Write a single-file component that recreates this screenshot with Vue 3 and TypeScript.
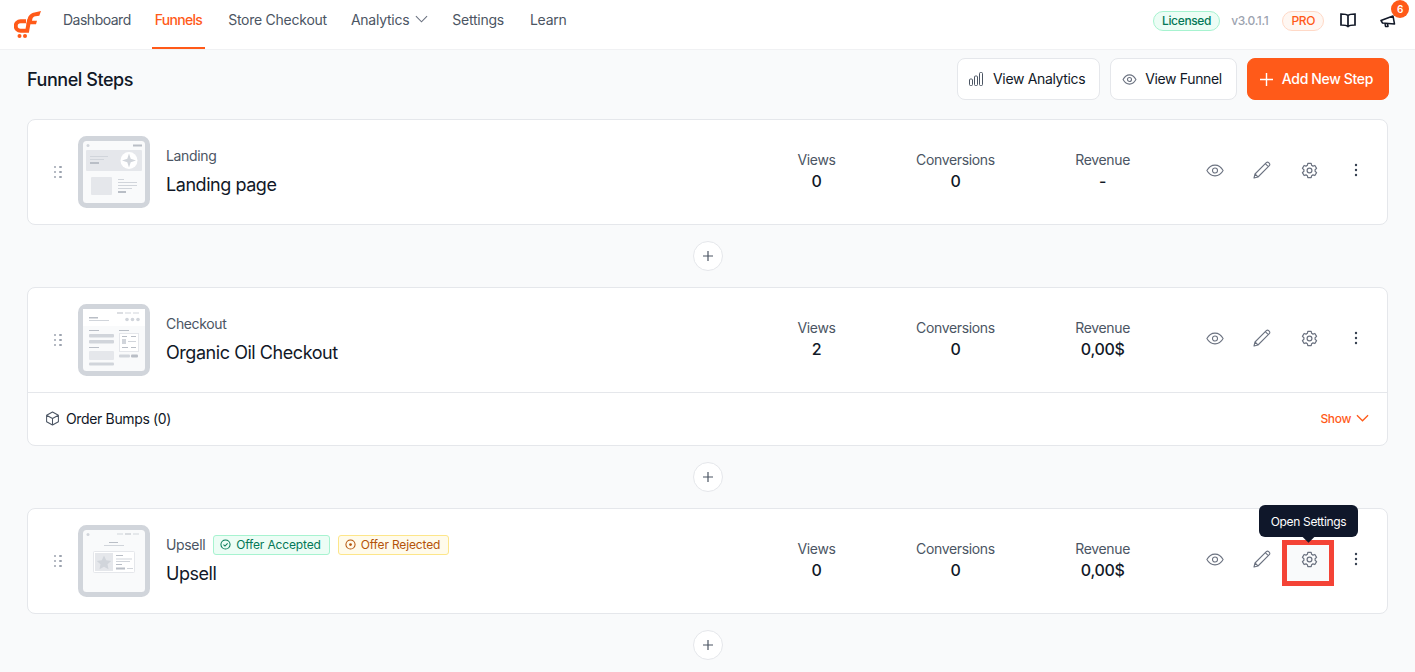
<template>
  <div class="app-shell">
    <!-- top nav -->
    <header class="top-nav">
      <svg class="logo" viewBox="13 6 28 29" width="28" height="29">
        <path d="M25 17.200h-5.500a4.800 4.800 0 0 0 0 9.600h6.700L28.200 15.500" fill="none" stroke="#ff5a19" stroke-width="4" />
        <path d="M26.500 15.800c.6-4.600 3.500-6.600 7-7.300l6.500-1.500-1.700 4.700-3.800.6c-1.700.3-2.900 1.200-3.200 2.900l-.3 1.500h5l-1 3.600h-9.600z" fill="#ff5a19" />
        <circle cx="18.500" cy="32" r="2" fill="#ff5a19" />
        <circle cx="24" cy="32" r="2" fill="#ff5a19" />
      </svg>
      <nav class="nav-links">
        <a v-for="item in navItems" :key="item" class="nav-link" :class="{ active: item === 'Funnels' }">
          {{ item }}
          <svg v-if="item === 'Analytics'" class="chevron" viewBox="0 0 14 8" width="13" height="8">
            <path d="M1 1l6 6 6-6" fill="none" stroke="#6b7280" stroke-width="1.200" />
          </svg>
        </a>
      </nav>
      <div class="nav-right">
        <span class="pill licensed">Licensed</span>
        <span class="version">v3.0.1.1</span>
        <span class="pill pro">PRO</span>
        <svg class="book" viewBox="0 0 16 15" width="16" height="15">
          <path d="M8 2.500C6.800 1.300 4 1 1 1v11c3 0 5.800.2 7 1.500 1.200-1.300 4-1.500 7-1.500V1c-3 0-5.800.3-7 1.500zm0 0v11" fill="none" stroke="#111827" stroke-width="1.700" />
        </svg>
        <span class="announce">
          <svg viewBox="0 0 16 14" width="16" height="14">
            <path d="M1 6.500l12-4.500 1.500 8-12-1zM5 9.500l.5 3h2.500l-.5-2.800" fill="none" stroke="#111827" stroke-width="1.500" stroke-linejoin="round" />
          </svg>
          <b class="count">6</b>
        </span>
      </div>
    </header>

    <main class="content">
      <div class="title-row">
        <h1>Funnel Steps</h1>
        <div class="title-actions">
          <button class="btn analytics">
            <svg viewBox="0 0 14 14" width="14" height="14" fill="none" stroke="#4b5563" stroke-width="1">
              <rect x="0.500" y="7" width="3" height="6.500" rx="1" />
              <rect x="5.500" y="4" width="3" height="9.500" rx="1" />
              <rect x="10.500" y="0.500" width="3" height="13" rx="1" />
            </svg>
            View Analytics
          </button>
          <button class="btn">
            <svg viewBox="0 0 16 12" width="15" height="11" fill="none" stroke="#6b7280" stroke-width="1.200">
              <path d="M1 6c1.800-3.200 4.200-5 7-5s5.200 1.800 7 5c-1.800 3.200-4.200 5-7 5s-5.200-1.800-7-5z" />
              <circle cx="8" cy="6" r="2.200" />
            </svg>
            View Funnel
          </button>
          <button class="btn primary">
            <svg viewBox="0 0 12 12" width="13" height="13">
              <path d="M6 0v12M0 6h12" stroke="#fff" stroke-width="1.300" />
            </svg>
            Add New Step
          </button>
        </div>
      </div>

      <template v-for="step in steps" :key="step.name">
        <section class="step-card">
          <div class="step-main">
            <span class="drag">
              <i v-for="n in 6" :key="n"></i>
            </span>

            <svg class="thumb" viewBox="0 0 72 72" width="72" height="72">
              <rect x="2.500" y="2.500" width="67" height="67" rx="6" fill="#f9fafb" stroke="#d1d5db" stroke-width="5" />
              <circle cx="10" cy="9.500" r="1.500" fill="#d1d5db" />
              <template v-if="step.type === 'Landing'">
                <rect x="55" y="8.500" width="9" height="2" fill="#b9bec6" />
                <rect x="8" y="14" width="56" height="21" rx="1" fill="#e5e7eb" />
                <circle cx="51" cy="24.500" r="8.500" fill="#fff" />
                <path d="M51 17.500l1.700 5.300 5.300 1.700-5.300 1.700-1.700 5.300-1.700-5.300-5.300-1.700 5.300-1.700z" fill="#d1d5db" />
                <rect x="12" y="20" width="18" height="1" fill="#d1d5db" />
                <rect x="12" y="23" width="14" height="1" fill="#d1d5db" />
                <rect x="12" y="26" width="9" height="2" fill="#b9bec6" />
                <rect x="13" y="41" width="21" height="18" rx="1" fill="#e5e7eb" />
                <rect x="40" y="43" width="6" height="1" fill="#d1d5db" />
                <rect x="40" y="46" width="19" height="1" fill="#d1d5db" />
                <rect x="40" y="49" width="19" height="1" fill="#d1d5db" />
                <rect x="40" y="52" width="14" height="1" fill="#d1d5db" />
                <rect x="40" y="55" width="8" height="2" fill="#b9bec6" />
              </template>
              <template v-else-if="step.type === 'Checkout'">
                <rect x="5" y="5" width="62" height="17" fill="#fff" />
                <rect x="39" y="8.500" width="6" height="1" fill="#b9bec6" />
                <rect x="47" y="8.500" width="6" height="1" fill="#d1d5db" />
                <rect x="55" y="8.500" width="6" height="1" fill="#d1d5db" />
                <rect x="11" y="13" width="9" height="1.500" fill="#b9bec6" />
                <rect x="11" y="16" width="20" height="1" fill="#d1d5db" />
                <circle cx="49" cy="15.500" r="1.800" fill="#d1d5db" />
                <circle cx="54.500" cy="15.500" r="1.800" fill="#d1d5db" />
                <circle cx="60" cy="15.500" r="1.800" fill="#d1d5db" />
                <rect x="11" y="26" width="10" height="1" fill="#b9bec6" />
                <rect x="11" y="30" width="25" height="3.500" rx="1" fill="#d1d5db" />
                <rect x="11" y="36" width="25" height="3.500" rx="1" fill="#d1d5db" />
                <rect x="11" y="43" width="10" height="1" fill="#b9bec6" />
                <rect x="11" y="47" width="25" height="9" rx="1" fill="#e5e7eb" />
                <rect x="11" y="58.500" width="25" height="3" rx="1" fill="#d1d5db" />
                <rect x="41" y="26" width="10" height="1" fill="#b9bec6" />
                <rect x="41.500" y="29.500" width="19" height="18" fill="#fff" stroke="#e5e7eb" />
                <rect x="44" y="35" width="4" height="5" fill="#d1d5db" />
                <rect x="44" y="32" width="5" height="1" fill="#b9bec6" />
                <rect x="53" y="32" width="5" height="1" fill="#b9bec6" />
                <rect x="50" y="37" width="8" height="1" fill="#d1d5db" />
                <rect x="44" y="43" width="6" height="1" fill="#b9bec6" />
                <rect x="53" y="43" width="5" height="1" fill="#b9bec6" />
                <rect x="41" y="50.500" width="11" height="3" rx="1" fill="#d1d5db" />
                <rect x="53" y="50.500" width="7" height="3" rx="1" fill="#b9bec6" />
              </template>
              <template v-else>
                <rect x="39" y="8.500" width="6" height="1" fill="#d1d5db" />
                <rect x="47" y="8.500" width="6" height="1" fill="#b9bec6" />
                <rect x="55" y="8.500" width="6" height="1" fill="#d1d5db" />
                <rect x="31" y="17" width="9" height="1" fill="#b9bec6" />
                <rect x="26" y="20" width="20" height="1" fill="#d1d5db" />
                <rect x="15.500" y="26.500" width="41" height="21" rx="1" fill="#fff" stroke="#e5e7eb" />
                <rect x="17" y="28" width="18" height="18" fill="#e5e7eb" />
                <path d="M26 30.500l2.200 4.800 5 .6-3.700 3.400 1 5-4.500-2.500-4.500 2.500 1-5-3.700-3.400 5-.6z" fill="#d1d5db" />
                <rect x="38" y="30" width="7" height="1" fill="#b9bec6" />
                <rect x="38" y="33.500" width="16" height="1" fill="#d1d5db" />
                <rect x="38" y="36" width="14" height="1" fill="#d1d5db" />
                <rect x="38" y="39" width="6" height="1" fill="#b9bec6" />
                <rect x="38" y="42.500" width="9" height="2" fill="#b9bec6" />
                <rect x="49" y="43" width="6" height="1" fill="#d1d5db" />
              </template>
            </svg>

            <div class="step-info">
              <div class="step-type">
                {{ step.type }}
                <template v-if="step.offers">
                  <span class="offer accepted">
                    <svg viewBox="0 0 12 12" width="11" height="11" fill="none" stroke="#047857" stroke-width="1.100">
                      <circle cx="6" cy="6" r="5" />
                      <path d="M3.800 6.200l1.600 1.500 2.900-3" />
                    </svg>
                    Offer Accepted
                  </span>
                  <span class="offer rejected">
                    <svg viewBox="0 0 12 12" width="11" height="11" fill="none" stroke="#b45309" stroke-width="1.100">
                      <circle cx="6" cy="6" r="5" />
                      <circle cx="6" cy="6" r="1.500" fill="#b45309" stroke="none" />
                    </svg>
                    Offer Rejected
                  </span>
                </template>
              </div>
              <div class="step-name">{{ step.name }}</div>
            </div>

            <div class="stats">
              <div class="stat"><span>Views</span><b>{{ step.views }}</b></div>
              <div class="stat"><span>Conversions</span><b>{{ step.conversions }}</b></div>
              <div class="stat"><span>Revenue</span><b>{{ step.revenue }}</b></div>
            </div>

            <div class="step-actions">
              <span class="act">
                <svg viewBox="0 0 20 14" width="18" height="13" fill="none" stroke="#6b7280" stroke-width="1.200">
                  <path d="M1 7c2.200-4 5.200-6 9-6s6.800 2 9 6c-2.200 4-5.200 6-9 6s-6.800-2-9-6z" />
                  <circle cx="10" cy="7" r="2.800" />
                </svg>
              </span>
              <span class="act">
                <svg viewBox="0 0 18 18" width="18" height="18" fill="none" stroke="#6b7280" stroke-width="1.100" stroke-linejoin="round">
                  <path d="M1 17l1-4L13.300 1.700c.7-.7 1.700-.7 2.400 0l.6.600c.7.700.7 1.700 0 2.400L5 16zM2 13l3 3M12.300 2.700l3 3" />
                </svg>
              </span>
              <span class="act settings">
                <template v-if="step.tooltip">
                  <span class="highlight"></span>
                  <span class="tooltip">Open Settings</span>
                </template>
                <svg class="gear" viewBox="0 0 24 24" width="17" height="17" fill="none" stroke="#6b7280" stroke-width="1.700" stroke-linejoin="round">
                  <path d="M9.600 2.500h4.800l.6 2.800 1.900 1.100 2.700-.9 2.400 4.100-2.100 1.900v2.200l2.100 1.900-2.400 4.100-2.700-.9-1.900 1.100-.6 2.800H9.600L9 19.900l-1.900-1.100-2.700.9L2 15.600l2.100-1.900v-2.200L2 9.600 4.400 5.500l2.700.9L9 5.300z" transform="translate(0 -.6)" />
                  <circle cx="12" cy="12" r="3.400" />
                </svg>
              </span>
              <span class="act">
                <svg viewBox="0 0 4 14" width="4" height="14" fill="#374151">
                  <circle cx="2" cy="2" r="1.200" />
                  <circle cx="2" cy="7" r="1.200" />
                  <circle cx="2" cy="12" r="1.200" />
                </svg>
              </span>
            </div>
          </div>

          <div v-if="step.bumps !== undefined" class="bumps">
            <svg viewBox="0 0 16 16" width="15" height="15" fill="none" stroke="#4b5563" stroke-width="1.100" stroke-linejoin="round">
              <path d="M8 1l6.300 3.500v7L8 15l-6.300-3.500v-7zM1.700 4.500L8 8l6.300-3.500M8 8v7" />
            </svg>
            <span>Order Bumps ({{ step.bumps }})</span>
            <a class="show">
              Show
              <svg viewBox="0 0 14 8" width="13" height="8">
                <path d="M1 1l6 6 6-6" fill="none" stroke="#ff5a19" stroke-width="1.400" />
              </svg>
            </a>
          </div>
        </section>

        <div class="add-row">
          <button class="add-circle">
            <svg viewBox="0 0 10 10" width="10" height="10">
              <path d="M5 0v10M0 5h10" stroke="#4b5563" stroke-width="1.200" />
            </svg>
          </button>
        </div>
      </template>
    </main>
  </div>
</template>

<script setup lang="ts">
interface Step {
  type: string
  name: string
  views: number
  conversions: number
  revenue: string
  bumps?: number
  offers?: boolean
  tooltip?: boolean
}

const navItems = ['Dashboard', 'Funnels', 'Store Checkout', 'Analytics', 'Settings', 'Learn']

const steps: Step[] = [
  { type: 'Landing', name: 'Landing page', views: 0, conversions: 0, revenue: '-' },
  { type: 'Checkout', name: 'Organic Oil Checkout', views: 2, conversions: 0, revenue: '0,00$', bumps: 0 },
  { type: 'Upsell', name: 'Upsell', views: 0, conversions: 0, revenue: '0,00$', offers: true, tooltip: true }
]
</script>

<style>
html,
body {
  margin: 0;
  overflow: hidden;
}
</style>

<style scoped>
.app-shell {
  min-height: 672px;
  background: #f9fafb;
  font-family: Inter, "Noto Sans", sans-serif;
  font-size: 14px;
  color: #111827;
  letter-spacing: -0.35px;
}

.top-nav {
  display: flex;
  align-items: center;
  height: 49px;
  padding: 0 19px 0 14px;
  background: #fff;
  border-bottom: 1px solid #f0f1f3;
}

.logo {
  margin-right: 18px;
}

.nav-links {
  display: flex;
  align-self: stretch;
  gap: 18px;
}

.nav-link {
  display: flex;
  align-items: center;
  gap: 6px;
  padding: 0 3px 9px;
  color: #4b5563;
  font-weight: 400;
  letter-spacing: -0.25px;
  border-bottom: 2px solid transparent;
}

.nav-link:first-child {
  letter-spacing: -0.5px;
}

.nav-link:nth-child(5) {
  margin-right: 2px;
}

.nav-link.active {
  margin-right: 2px;
  color: #ff5a19;
  font-weight: 500;
  letter-spacing: -0.7px;
  border-bottom-color: #ff5a19;
}

.nav-right {
  display: flex;
  align-items: center;
  margin-left: auto;
  margin-top: -8px;
}

.pill {
  height: 18px;
  line-height: 18px;
  padding: 0 8px;
  border-radius: 10px;
  border: 1px solid;
  font-size: 12px;
  font-weight: 500;
}

.licensed {
  background: #ecfdf5;
  border-color: #a7f3d0;
  color: #047857;
}

.version {
  margin: 0 14px 0 11px;
  color: #9ca3af;
  font-size: 12px;
  font-weight: 500;
}

.pro {
  background: #fff7f2;
  border-color: #ffd9c7;
  color: #ff5a19;
}

.book {
  margin-left: 16px;
}

.announce {
  position: relative;
  display: flex;
  margin-left: 24px;
}

.count {
  position: absolute;
  top: -14px;
  left: 11px;
  width: 18px;
  height: 18px;
  line-height: 18px;
  border-radius: 50%;
  background: #ff5a19;
  color: #fff;
  font-size: 10px;
  font-weight: 600;
  text-align: center;
}

.content {
  padding: 8px 27px 0;
}

.title-row {
  display: flex;
  align-items: center;
  justify-content: space-between;
  margin-bottom: 19px;
}

h1 {
  margin: 0;
  font-size: 18px;
  font-weight: 500;
  letter-spacing: -0.45px;
  color: #111827;
}

.title-actions {
  display: flex;
  gap: 10px;
  margin-right: -1px;
}

.btn {
  display: flex;
  align-items: center;
  gap: 8px;
  height: 42px;
  padding: 0 14px 2px 11px;
  border: 1px solid #e5e7eb;
  border-radius: 8px;
  background: #fff;
  color: #111827;
  font: inherit;
  letter-spacing: inherit;
  font-weight: 400;
}

.btn svg {
  flex: none;
  margin-top: 2px;
}

.btn.analytics {
  gap: 10px;
  padding-right: 14px;
}

.btn.primary {
  gap: 9px;
  padding: 0 15px 2px 12px;
  background: #ff5a19;
  border-color: #ff5a19;
  color: #fff;
  font-weight: 500;
}

.step-card {
  background: #fff;
  border: 1px solid #e5e7eb;
  border-radius: 8px;
}

.step-main {
  display: flex;
  align-items: center;
  height: 104px;
  padding: 0 23px;
}

.drag {
  display: grid;
  grid-template-columns: 2.5px 2.5px;
  gap: 2.500px 3px;
  margin: 0 16.500px 0 2.500px;
  flex: none;
}

.drag i {
  width: 2.500px;
  height: 2.500px;
  background: #9ca3af;
  border-radius: 1px;
}

.thumb {
  flex: none;
  margin-right: 16px;
}

.step-info {
  flex: 1;
  padding-bottom: 2px;
}

.step-type {
  display: flex;
  align-items: center;
  gap: 8px;
  height: 20px;
  color: #4b5563;
}

.step-name {
  margin-top: 7px;
  font-size: 18px;
  font-weight: 400;
  letter-spacing: -0.45px;
  line-height: 24px;
}

.offer {
  display: flex;
  align-items: center;
  gap: 5px;
  height: 18px;
  padding: 0 8px 0 6px;
  border: 1px solid;
  border-radius: 3px;
  font-size: 12px;
  letter-spacing: -0.15px;
}

.accepted {
  background: #ecfdf5;
  border-color: #a7f3d0;
  color: #047857;
}

.rejected {
  background: #fffbeb;
  border-color: #fde68a;
  color: #b45309;
}

.stats {
  display: flex;
  gap: 80.500px;
  margin-right: 72px;
  padding-bottom: 3px;
}

.stat {
  display: flex;
  flex-direction: column;
  align-items: center;
  color: #4b5563;
}

.stat b {
  margin-top: 3px;
  font-size: 16px;
  font-weight: 500;
  color: #111827;
}

.step-actions {
  display: flex;
  align-items: center;
  gap: 21px;
  margin-top: -4px;
  margin-right: -5px;
}

.act {
  position: relative;
  display: flex;
  align-items: center;
  justify-content: center;
  width: 26px;
  height: 26px;
}

.gear {
  position: relative;
}

.highlight {
  position: absolute;
  left: -14px;
  top: -6px;
  width: 42px;
  height: 36px;
  border: 5px solid #f44336;
  background: #f9fafb;
}

.tooltip {
  position: absolute;
  z-index: 1;
  left: -37px;
  top: -41px;
  width: 99px;
  height: 32px;
  line-height: 34px;
  border-radius: 6px;
  background: #0f172a;
  color: #fff;
  font-size: 12px;
  text-align: center;
}

.tooltip::after {
  content: "";
  position: absolute;
  left: 45px;
  bottom: -4px;
  width: 9px;
  height: 9px;
  background: #0f172a;
  transform: rotate(45deg);
}

.bumps {
  display: flex;
  align-items: center;
  gap: 6px;
  height: 50px;
  padding: 0 18px 2px 17px;
  border-top: 1px solid #e5e7eb;
}

.show {
  display: flex;
  align-items: center;
  gap: 5px;
  margin-left: auto;
  color: #ff5a19;
  font-size: 12px;
  font-weight: 500;
}

.add-row {
  display: flex;
  justify-content: center;
  padding: 16px 0 16px 1px;
}

.add-circle {
  display: flex;
  align-items: center;
  justify-content: center;
  width: 30px;
  height: 30px;
  padding: 0;
  border: 1px solid #e5e7eb;
  border-radius: 50%;
  background: #fff;
}
</style>
